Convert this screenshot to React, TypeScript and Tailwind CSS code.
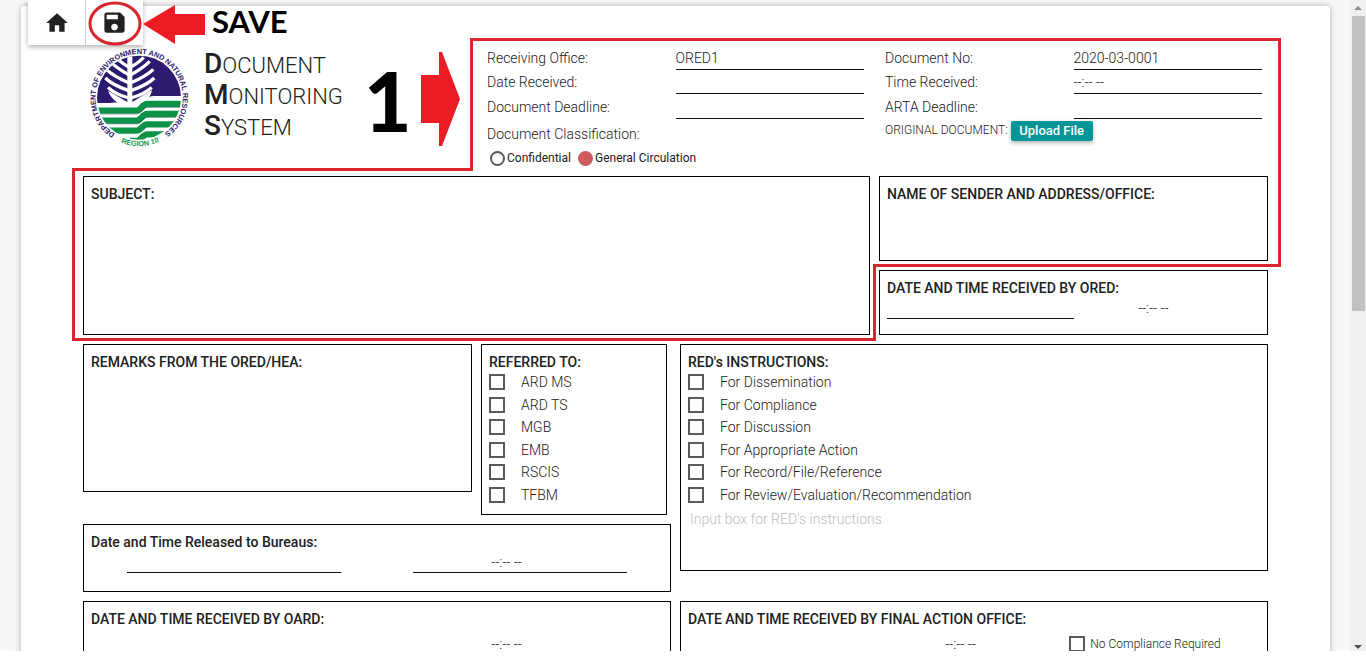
import { MdHome, MdSave } from 'react-icons/md';

const lineInput =
  'h-full w-full min-w-0 border-b border-[#111] bg-transparent pt-[2px] text-[14px] font-light text-[#212121] outline-none';

function Field({ id, label, value = '' }: { id: string; label: string; value?: string }) {
  return (
    <div className="grid grid-cols-2">
      <label htmlFor={id} className="self-end whitespace-nowrap leading-[24px]">
        {label}
      </label>
      <input id={id} type="text" defaultValue={value} className={lineInput} />
    </div>
  );
}

function TimeInput({ label, underlined = false }: { label: string; underlined?: boolean }) {
  return (
    <input
      type="text"
      aria-label={label}
      defaultValue="--:-- --"
      className={
        underlined
          ? 'h-[22px] w-full min-w-0 border-b border-[#111] bg-transparent pr-[27px] text-center font-light outline-none'
          : 'h-[22px] w-full min-w-0 bg-transparent pr-[27px] text-center font-light outline-none'
      }
    />
  );
}

function DateInput({ label }: { label: string }) {
  return (
    <input
      type="text"
      aria-label={label}
      className="h-[22px] w-full min-w-0 border-b border-[#111] bg-transparent font-light outline-none"
    />
  );
}

const box = 'border border-black px-[7px] py-2';
const heading = 'block text-[14px] font-medium leading-[18px] text-[#212121]';
const checkbox = 'size-4 shrink-0 appearance-none border-2 border-[#5a5a5a] bg-white checked:bg-[#5a5a5a]';
const radio =
  'size-[15px] shrink-0 appearance-none rounded-full border-2 border-[#5a5a5a] bg-white checked:border-[#cd5c5c] checked:bg-[#cd5c5c]';

function CheckList({ items }: { items: string[] }) {
  return (
    <div className="grid h-[135px] grid-rows-6">
      {items.map((item) => (
        <label key={item} className="flex items-center gap-4 whitespace-nowrap leading-[18px]">
          <input type="checkbox" className={checkbox} />
          {item}
        </label>
      ))}
    </div>
  );
}

function Seal() {
  const ribs = [
    [108, 52, 80],
    [90, 64, 104],
    [79, 88, 128],
    [76, 114, 152],
    [84, 142, 174],
  ];
  return (
    <svg
      viewBox="24 12 312 318"
      className="h-[106px] w-[104px] shrink-0 overflow-visible"
      role="img"
      aria-label="Department seal"
    >
      <defs>
        <clipPath id="disc">
          <circle cx="177" cy="173" r="126" />
        </clipPath>
        <path id="ringTop" d="M 105 282 A 131 131 0 1 1 236 290" />
        <path id="ringBottom" d="M 98 295 A 145 145 0 0 0 262 291" />
      </defs>
      <g clipPath="url(#disc)">
        <rect x="40" y="40" width="280" height="270" fill="#fff" />
        <path d="M40 40H320V168H222C200 168 190 189 168 189H130C108 186 96 189 82 189H40Z" fill="#2b1a6e" />
        <path d="M84 152C92 172 104 182 116 190H184C204 180 212 168 216 150L157 186V48H142V186Z" fill="#fff" />
        {ribs.map(([x, y, j]) => (
          <g key={y} stroke="#fff" strokeWidth="10" fill="none">
            <path d={`M${x} ${y}Q${x + 20} ${y + 20} 146 ${j}`} />
            <path d={`M${299 - x} ${y}Q${279 - x} ${y + 20} 153 ${j}`} />
          </g>
        ))}
        <g fill="none" stroke="#0d9347" strokeWidth="19">
          <path d="M40 212H170C184 212 186 192 202 192H320" />
          <path d="M40 242H170C184 242 186 222 202 222H320" />
          <path d="M40 272H170C184 272 186 253 202 253H320" />
          <path d="M150 303H170C184 303 186 283 202 283H320" />
        </g>
        <g fill="none" stroke="#123" strokeOpacity="0.5" strokeWidth="2">
          <path d="M40 222H170C184 222 186 202 202 202H320" />
          <path d="M40 252H170C184 252 186 232 202 232H320" />
        </g>
      </g>
      <g fontFamily="'Liberation Sans', Arial, sans-serif" fontWeight="700">
        <text fontSize="22" fill="#2b1a6e">
          <textPath href="#ringTop">DEPARTMENT OF ENVIRONMENT AND NATURAL RESOURCES</textPath>
        </text>
        <text fontSize="22" fill="#1c9650" textAnchor="middle">
          <textPath href="#ringBottom" startOffset="50%">
            REGION 10
          </textPath>
        </text>
      </g>
    </svg>
  );
}

function Annotations() {
  return (
    <div className="pointer-events-none absolute left-0 top-0 z-20 font-[Lato,sans-serif] font-bold text-black">
      <svg width="1300" height="350" viewBox="0 0 1300 350" fill="none">
        <path
          d="M471.5 39.5H1279.5V265.5H874.5V339.5H73.5V169.5H471.5Z"
          stroke="#d9252d"
          strokeWidth="3"
        />
        <ellipse cx="115" cy="23.5" rx="25" ry="20.5" stroke="#d9252d" strokeWidth="3" />
        <path d="M143 24L175 5V14H205V35H175V44Z" fill="#ed1c24" />
        <path d="M421 75H439V52H442L460 99L442 146H439V123H421Z" fill="#ed1c24" />
      </svg>
      <span className="absolute left-[212px] top-[3px] text-[31px] leading-[36px]">SAVE</span>
      <span className="absolute left-[364px] top-[50px] text-[82px] font-black leading-[100px]">1</span>
    </div>
  );
}

const titleLines = [
  ['D', 'OCUMENT'],
  ['M', 'ONITORING'],
  ['S', 'YSTEM'],
];

export default function App() {
  return (
    <div className="h-screen overflow-hidden bg-white pb-[11px] font-[Roboto,sans-serif] text-[14px] font-light text-[#212121]">
      <div className="relative flex h-full overflow-hidden">
        <main className="min-w-0 flex-1 overflow-hidden bg-[#f8f8f8] pl-[21px] pr-[20px] pt-[6px]">
          <div className="min-h-full rounded-t-[3px] bg-white px-[62px] pb-10 shadow-[0_0_6px_rgba(0,0,0,0.3)]">
            <header className="flex h-[170px]">
              <div className="flex w-[404px] shrink-0 gap-3 pl-[5px] pt-[38px]">
                <Seal />
                <h1 className="pt-[4px] text-[22px] font-light leading-[31px]">
                  {titleLines.map(([first, rest]) => (
                    <span key={first} className="block h-[31px]">
                      <span className="text-[28px] font-medium leading-[31px]">{first}</span>
                      {rest}
                    </span>
                  ))}
                </h1>
              </div>
              <div className="grid flex-1 grid-cols-2 gap-[21px] pr-[6px] pt-[39px]">
                <div>
                  <div className="grid h-[74px] grid-rows-3">
                    <Field id="office" label="Receiving Office:" value="ORED1" />
                    <Field id="received" label="Date Received:" />
                    <Field id="deadline" label="Document Deadline:" />
                  </div>
                  <fieldset>
                    <legend className="leading-[30px]">Document Classification:</legend>
                    <div className="flex h-[18px] items-center gap-[7px] pl-[3px] text-[12px] font-normal">
                      <label className="flex items-center gap-[2px]">
                        <input type="radio" name="class" className={radio} />
                        Confidential
                      </label>
                      <label className="flex items-center gap-[2px]">
                        <input type="radio" name="class" defaultChecked className={radio} />
                        General Circulation
                      </label>
                    </div>
                  </fieldset>
                </div>
                <div>
                  <div className="grid h-[74px] grid-rows-3">
                    <Field id="docno" label="Document No:" value="2020-03-0001" />
                    <Field id="time" label="Time Received:" value="--:-- --" />
                    <Field id="arta" label="ARTA Deadline:" />
                  </div>
                  <div className="flex h-[22px] items-end gap-[3px] whitespace-nowrap text-[12px]">
                    <span className="self-center">ORIGINAL DOCUMENT:</span>
                    <button
                      type="button"
                      className="h-5 w-[82px] rounded-[2px] bg-[#009698] text-[13px] font-medium leading-5 text-white shadow-[0_2px_4px_rgba(0,0,0,0.3)]"
                    >
                      Upload File
                    </button>
                  </div>
                </div>
              </div>
            </header>

            <div className="flex flex-col gap-[9px]">
              <div className="grid grid-cols-[787fr_389fr] gap-[9px]">
                <section className={`${box} flex flex-col`}>
                  <label htmlFor="subject" className={heading}>
                    SUBJECT:
                  </label>
                  <textarea id="subject" className="w-full flex-1 resize-none outline-none" />
                </section>
                <div className="flex flex-col gap-[9px]">
                  <section className={`${box} flex h-[85px] flex-col`}>
                    <label htmlFor="sender" className={heading}>
                      NAME OF SENDER AND ADDRESS/OFFICE:
                    </label>
                    <textarea id="sender" className="min-h-0 w-full flex-1 resize-none outline-none" />
                  </section>
                  <section className={`${box} h-[65px]`}>
                    <h2 className={heading}>DATE AND TIME RECEIVED BY ORED:</h2>
                    <div className="grid grid-cols-2">
                      <DateInput label="Date received by ORED" />
                      <TimeInput label="Time received by ORED" />
                    </div>
                  </section>
                </div>
              </div>

              <div className="grid grid-cols-2 items-start gap-[9px]">
                <div className="flex flex-col gap-[9px]">
                  <div className="grid grid-cols-[389fr_186fr] items-start gap-[9px] pr-1">
                    <section className={`${box} flex h-[148px] flex-col`}>
                      <label htmlFor="remarks" className={heading}>
                        REMARKS FROM THE ORED/HEA:
                      </label>
                      <textarea id="remarks" className="w-full flex-1 resize-none outline-none" />
                    </section>
                    <section className={box}>
                      <h2 className={heading}>REFERRED TO:</h2>
                      <CheckList items={['ARD MS', 'ARD TS', 'MGB', 'EMB', 'RSCIS', 'TFBM']} />
                    </section>
                  </div>
                  <section className={`${box} h-[68px]`}>
                    <h2 className={heading}>Date and Time Released to Bureaus:</h2>
                    <div className="grid grid-cols-2">
                      <div className="px-9">
                        <DateInput label="Date released" />
                      </div>
                      <div className="px-9">
                        <TimeInput label="Time released" underlined />
                      </div>
                    </div>
                  </section>
                </div>
                <section className={`${box} h-[227px]`}>
                  <h2 className={heading}>RED's INSTRUCTIONS:</h2>
                  <CheckList
                    items={[
                      'For Dissemination',
                      'For Compliance',
                      'For Discussion',
                      'For Appropriate Action',
                      'For Record/File/Reference',
                      'For Review/Evaluation/Recommendation',
                    ]}
                  />
                  <textarea
                    aria-label="RED's instructions"
                    placeholder="Input box for RED's instructions"
                    className="block h-[50px] w-full resize-none px-[2px] pt-1 leading-[18px] placeholder-[#c0c0c0] outline-none"
                  />
                </section>
              </div>

              <div className="grid grid-cols-2 gap-[9px]">
                <section className={box}>
                  <h2 className={heading}>DATE AND TIME RECEIVED BY OARD:</h2>
                  <div className="grid grid-cols-2 pt-[5px]">
                    <div className="px-9">
                      <DateInput label="Date received by OARD" />
                    </div>
                    <div className="px-9">
                      <TimeInput label="Time received by OARD" underlined />
                    </div>
                  </div>
                </section>
                <section className={box}>
                  <h2 className={heading}>DATE AND TIME RECEIVED BY FINAL ACTION OFFICE:</h2>
                  <div className="grid grid-cols-3 pt-[5px]">
                    <DateInput label="Date received by final action office" />
                    <TimeInput label="Time received by final action office" underlined />
                    <label className="flex items-center gap-[5px] whitespace-nowrap text-[12px]">
                      <input type="checkbox" className={checkbox} />
                      No Compliance Required
                    </label>
                  </div>
                </section>
              </div>
            </div>
          </div>
        </main>

        <div aria-hidden="true" className="flex w-4 shrink-0 flex-col items-center bg-[#f0f0f0]">
          <svg viewBox="0 0 16 16" className="size-4">
            <path d="M4 10L8 6L12 10Z" fill="#8b8b8b" />
          </svg>
          <div className="h-[295px] w-[13px] bg-[#c1c1c1]" />
          <svg viewBox="0 0 16 16" className="mt-auto mb-[-4px] size-4">
            <path d="M4 6L8 10L12 6Z" fill="#505050" />
          </svg>
        </div>

        <nav className="absolute left-7 top-0 z-10 flex h-[45px] bg-white shadow-[0_2px_5px_rgba(0,0,0,0.3)]">
          <button type="button" aria-label="Home" className="flex w-[57px] items-center justify-center">
            <MdHome size={26} />
          </button>
          <button
            type="button"
            aria-label="Save"
            className="flex w-[58px] items-center justify-center border-l border-[#c9c9c9]"
          >
            <MdSave size={27} />
          </button>
        </nav>
        <Annotations />
      </div>
    </div>
  );
}
